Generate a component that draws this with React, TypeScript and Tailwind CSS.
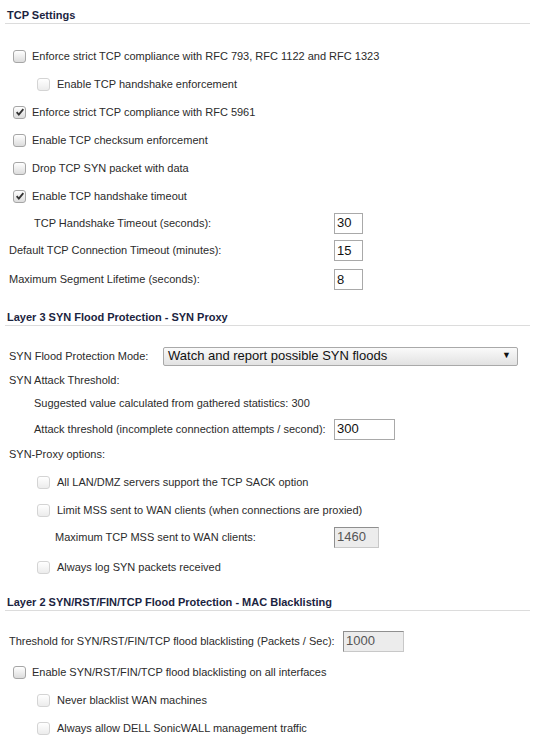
import React from "react";

const FONT = "font-['Liberation_Sans',Arial,sans-serif]";

function Box({ checked, dim }: { checked?: boolean; dim?: boolean }) {
  return (
    <span
      className={`relative inline-flex h-[13px] w-[13px] shrink-0 items-center justify-center rounded-[3px] border ${
        dim
          ? "border-[#d4d4d4] bg-gradient-to-b from-white to-[#ececec]"
          : "border-[#a6a6a6] bg-gradient-to-b from-white to-[#dcdcdc]"
      }`}
    >
      {checked && (
        <svg viewBox="0 0 12 12" className="h-[10px] w-[10px]">
          <path d="M2 6.2 L4.6 9 L10 2.6" fill="none" stroke="#333" strokeWidth="2.2" />
        </svg>
      )}
    </span>
  );
}

function Check({
  label,
  checked,
  sub,
  h,
}: {
  label: string;
  checked?: boolean;
  sub?: boolean;
  h: string;
}) {
  return (
    <div className={`flex items-center ${h} ${sub ? "pl-[37px] gap-[7px]" : "pl-[13px] gap-[6px]"}`}>
      <Box checked={checked} dim={sub} />
      <span>{label}</span>
    </div>
  );
}

function Field({
  label,
  value,
  pl,
  lw,
  iw,
  h,
  disabled,
}: {
  label: string;
  value: string;
  pl: string;
  lw: string;
  iw: string;
  h: string;
  disabled?: boolean;
}) {
  return (
    <div className={`flex items-center ${h} ${pl}`}>
      <span className={`shrink-0 ${lw}`}>{label}</span>
      <div
        className={`flex h-[21px] items-center border pl-[2px] text-[13px] ${iw} ${
          disabled
            ? "border-[#c8c8c8] border-l-[#8f8f8f] border-t-[#8f8f8f] bg-[#ececec] text-[#555]"
            : "border-[#a9a9a9] bg-white text-[#111]"
        }`}
      >
        {value}
      </div>
    </div>
  );
}

function Heading({ title, pt }: { title: string; pt: string }) {
  return (
    <div className={`mx-[5px] border-b border-[#dcdcdc] pb-[1px] pl-[2px] ${pt}`}>
      <h2 className="text-[11px] font-bold leading-[14px] text-[#1b2440]">{title}</h2>
    </div>
  );
}

export default function App() {
  return (
    <div className={`${FONT} h-[742px] w-[535px] overflow-hidden bg-white text-[11px] text-[#2b2b2b]`}>
      <Heading title="TCP Settings" pt="pt-[8px]" />
      <div className="mt-[18px]">
        <Check h="h-[28px]" label="Enforce strict TCP compliance with RFC 793, RFC 1122 and RFC 1323" />
        <Check h="h-[28px]" sub label="Enable TCP handshake enforcement" />
        <Check h="h-[28px]" checked label="Enforce strict TCP compliance with RFC 5961" />
        <Check h="h-[28px]" label="Enable TCP checksum enforcement" />
        <Check h="h-[28px]" label="Drop TCP SYN packet with data" />
        <Check h="h-[28px]" checked label="Enable TCP handshake timeout" />
        <Field h="h-[26px]" pl="pl-[34px]" lw="w-[300px]" iw="w-[29px]" label="TCP Handshake Timeout (seconds):" value="30" />
        <Field h="h-[29px]" pl="pl-[9px]" lw="w-[325px]" iw="w-[29px]" label="Default TCP Connection Timeout (minutes):" value="15" />
        <Field h="h-[29px]" pl="pl-[9px]" lw="w-[325px]" iw="w-[29px]" label="Maximum Segment Lifetime (seconds):" value="8" />
      </div>

      <Heading title="Layer 3 SYN Flood Protection - SYN Proxy" pt="pt-[16px]" />
      <div className="mt-[16px]">
        <div className="flex h-[28px] items-center pl-[9px]">
          <span className="w-[154px] shrink-0">SYN Flood Protection Mode:</span>
          <div className="flex h-[19px] w-[355px] items-center justify-between rounded-[2px] border border-[#a9a9a9] bg-gradient-to-b from-[#fafafa] to-[#e2e2e2] pl-[4px] pr-[6px] text-[13px] text-[#111]">
            <span>Watch and report possible SYN floods</span>
            <span className="text-[9px]">▼</span>
          </div>
        </div>
        <div className="flex h-[21px] items-center pl-[9px]">SYN Attack Threshold:</div>
        <div className="flex h-[24px] items-center pl-[34px]">
          Suggested value calculated from gathered statistics: 300
        </div>
        <Field h="h-[28px]" pl="pl-[34px]" lw="w-[300px]" iw="w-[61px]" label="Attack threshold (incomplete connection attempts / second):" value="300" />
        <div className="flex h-[22px] items-center pl-[9px]">SYN-Proxy options:</div>
        <Check h="h-[34px]" sub label="All LAN/DMZ servers support the TCP SACK option" />
        <Check h="h-[22px]" sub label="Limit MSS sent to WAN clients (when connections are proxied)" />
        <Field h="h-[32px]" pl="pl-[55px]" lw="w-[279px]" iw="w-[45px]" label="Maximum TCP MSS sent to WAN clients:" value="1460" disabled />
        <Check h="h-[28px]" sub label="Always log SYN packets received" />
      </div>

      <Heading title="Layer 2 SYN/RST/FIN/TCP Flood Protection - MAC Blacklisting" pt="pt-[14px]" />
      <div className="mt-[16px]">
        <Field h="h-[28px]" pl="pl-[9px]" lw="w-[334px]" iw="w-[61px]" label="Threshold for SYN/RST/FIN/TCP flood blacklisting (Packets / Sec):" value="1000" disabled />
        <Check h="h-[34px]" label="Enable SYN/RST/FIN/TCP flood blacklisting on all interfaces" />
        <Check h="h-[22px]" sub label="Never blacklist WAN machines" />
        <Check h="h-[34px]" sub label="Always allow DELL SonicWALL management traffic" />
      </div>
    </div>
  );
}
